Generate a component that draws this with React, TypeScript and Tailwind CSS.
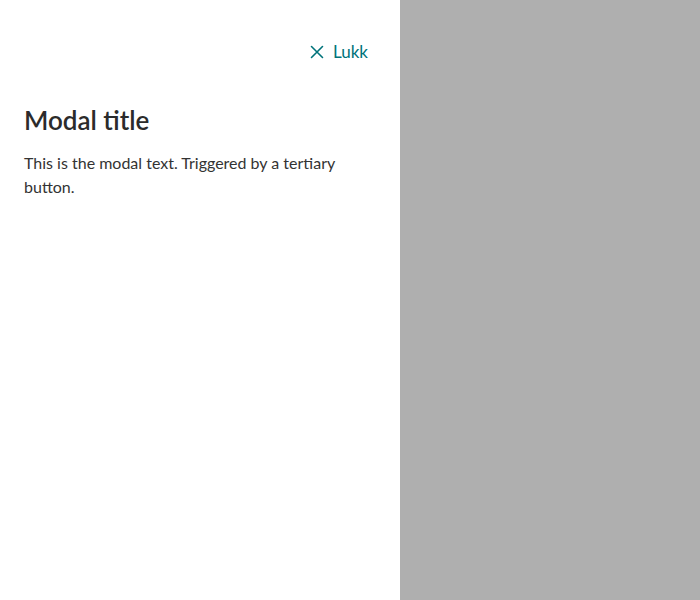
export default function App() {
  return (
    <div className="flex h-[600px] w-[700px] bg-[#afafaf]" style={{ fontFamily: 'Lato, "Open Sans", sans-serif' }}>
      {/* Drawer panel */}
      <div className="flex h-full w-[400px] flex-col bg-white">
        <div className="flex justify-end px-8 pt-[40px]">
          <button className="flex items-center gap-[9px] text-[17px] leading-6 text-[#00737a]">
            <svg width="14" height="14" viewBox="0 0 14 14" fill="none" stroke="currentColor" strokeWidth="1.6" strokeLinecap="round">
              <path d="M1.5 1.5l11 11M12.5 1.5l-11 11" />
            </svg>
            <span>Lukk</span>
          </button>
        </div>
        <div className="px-6 pt-[40px]">
          <h2 className="text-[26px] font-semibold leading-8 text-[#2b2b2b]">Modal title</h2>
          <p className="mt-[15px] text-[16px] leading-6 text-[#333]">
            This is the modal text. Triggered by a tertiary button.
          </p>
        </div>
      </div>
    </div>
  );
}
